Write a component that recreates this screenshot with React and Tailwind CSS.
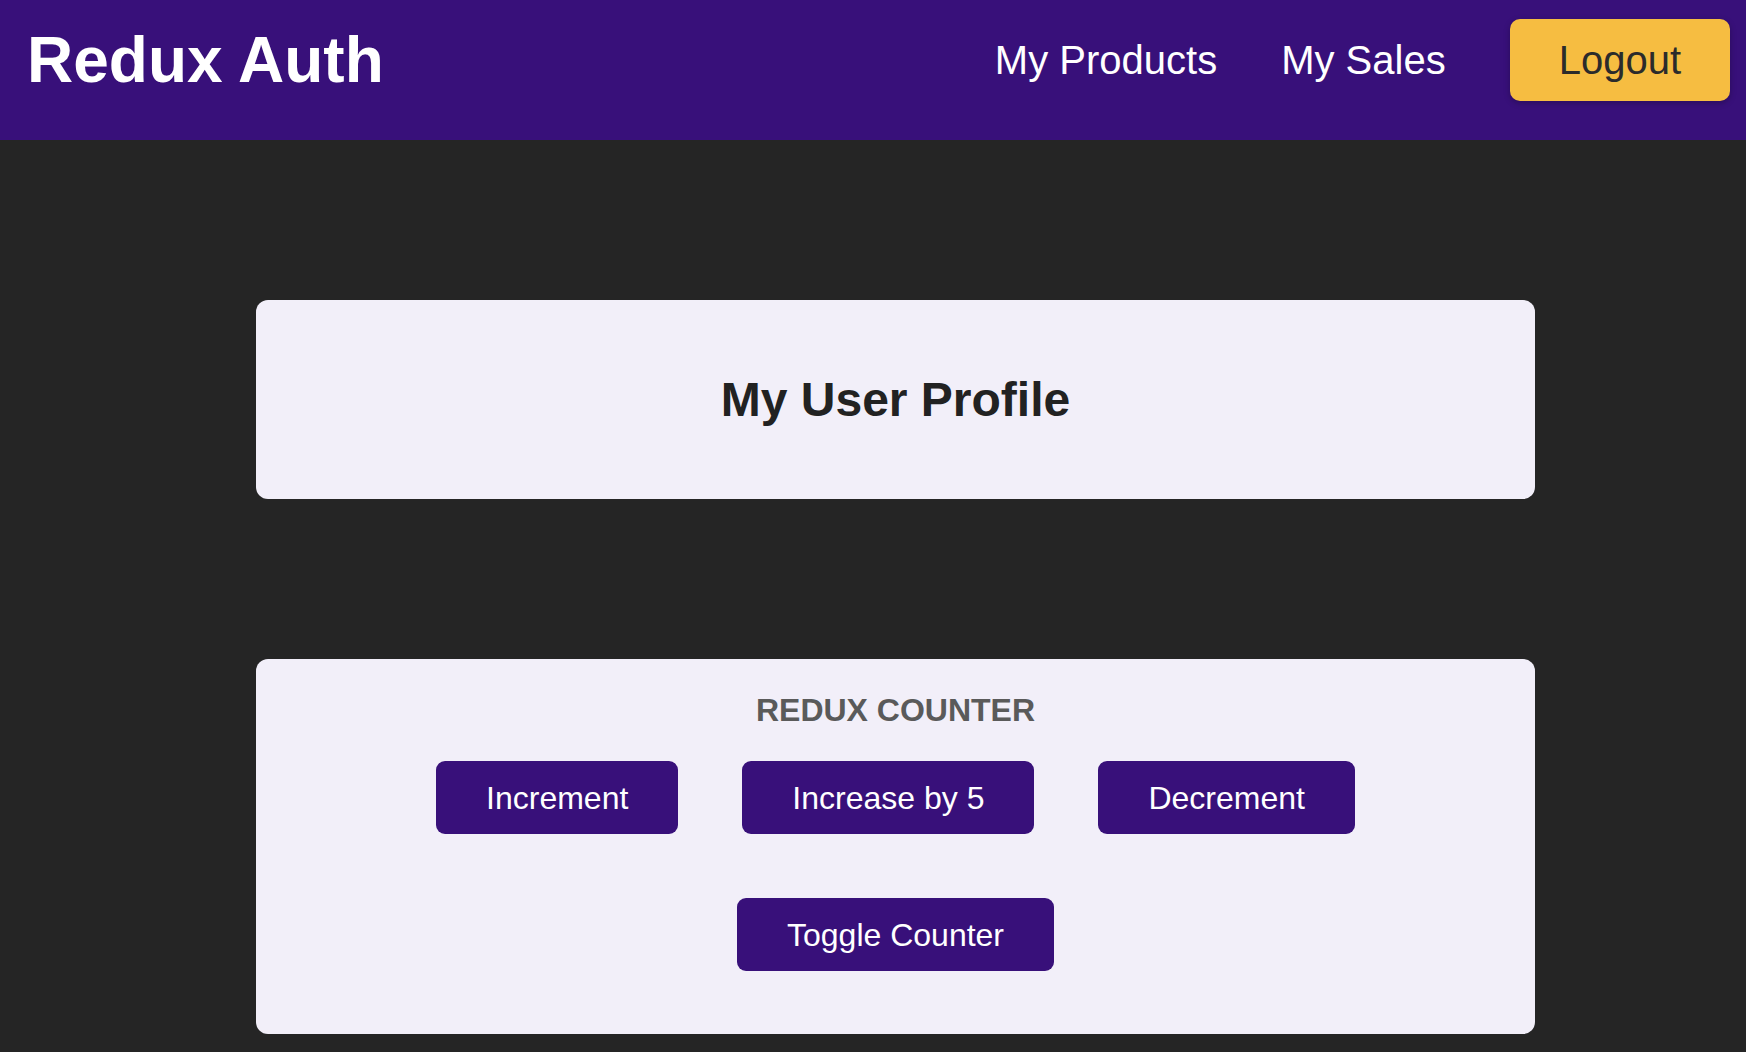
import React from 'react';

const Header = () => {
    return (
        <header className="h-[140px] bg-[#38107a] flex items-center justify-between pl-[27px] pr-[16px] pb-[20px]">
            <h1 className="text-[64px] font-bold text-white leading-normal">Redux Auth</h1>
            <nav>
                <ul className="flex items-center gap-[64px]">
                    <li>
                        <a href="#" className="text-[40px] text-white leading-normal">My Products</a>
                    </li>
                    <li>
                        <a href="#" className="text-[40px] text-white leading-normal">My Sales</a>
                    </li>
                    <li>
                        <button className="h-[82px] px-[49px] text-[40px] leading-normal text-[#2b2b2b] bg-[#f6bd41] rounded-[10px] shadow-[0_2px_6px_rgba(0,0,0,0.25)]">
                            Logout
                        </button>
                    </li>
                </ul>
            </nav>
        </header>
    );
};

const CounterButton = ({ children }) => (
    <button className="h-[73px] px-[50px] flex items-center text-[32px] leading-normal text-white bg-[#38107a] rounded-[9px]">
        {children}
    </button>
);

const App = () => {
    return (
        <div className="min-h-screen bg-[#252525] font-['Liberation_Sans',Arial,sans-serif]">
            <Header />
            <main className="pb-[40px]">
                {/* Profile */}
                <section className="mt-[160px] ml-[256px] w-[1279px] h-[199px] bg-[#f2eff9] rounded-[12px] flex items-center justify-center">
                    <h2 className="text-[48px] font-bold text-[#222222] leading-normal">My User Profile</h2>
                </section>

                {/* Counter */}
                <section className="mt-[160px] ml-[256px] w-[1279px] h-[375px] bg-[#f2eff9] rounded-[12px] pt-[27px] flex flex-col items-center">
                    <h1 className="text-[32px] font-bold uppercase text-[#5a5a5a] leading-normal">Redux Counter</h1>
                    <div className="mt-[27px] flex justify-center gap-[64px]">
                        <CounterButton>Increment</CounterButton>
                        <CounterButton>Increase by 5</CounterButton>
                        <CounterButton>Decrement</CounterButton>
                    </div>
                    <div className="mt-[64px] flex justify-center">
                        <CounterButton>Toggle Counter</CounterButton>
                    </div>
                </section>
            </main>
        </div>
    );
};

export default App;
